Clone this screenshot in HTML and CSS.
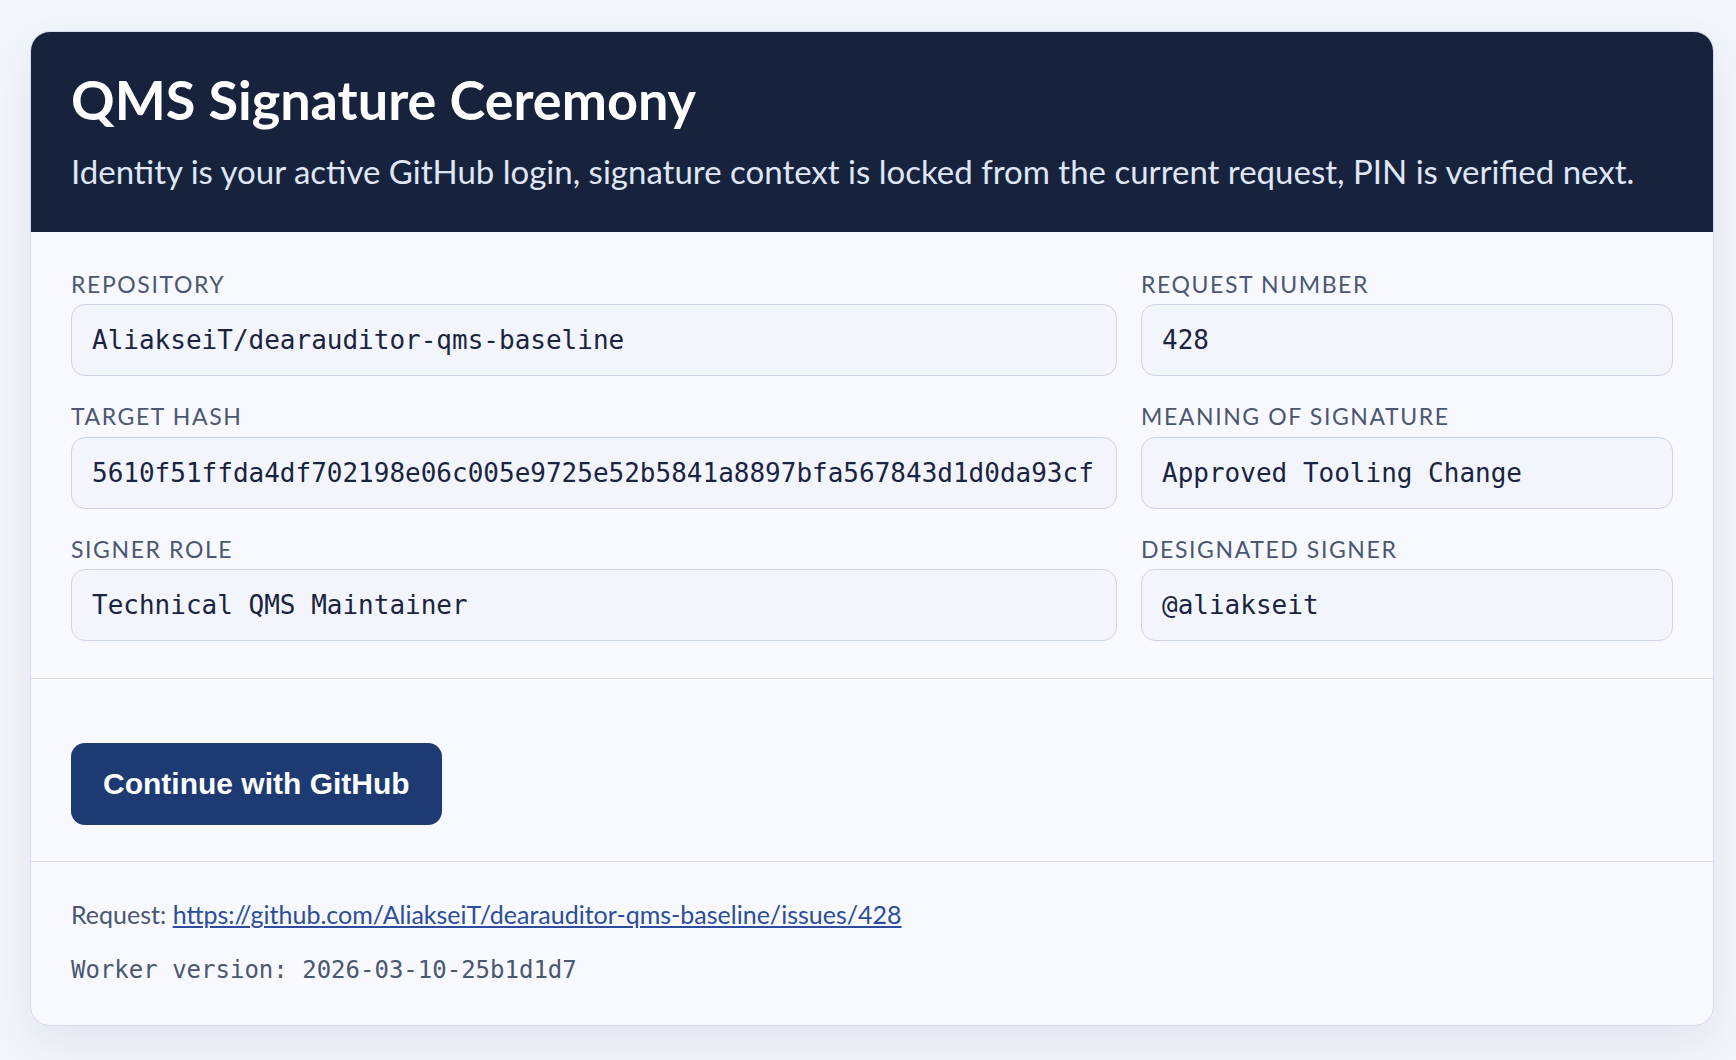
FILE: index.html
```html
<!DOCTYPE html>
<html lang="en">
<head>
    <meta charset="UTF-8">
    <meta name="viewport" content="width=device-width, initial-scale=1.0">
    <title>QMS Signature Ceremony</title>
    <link rel="stylesheet" href="styles.css">
</head>
<body>
    <main class="card">
        <header class="card-head">
            <h1>QMS Signature Ceremony</h1>
            <p>Identity is your active GitHub login, signature context is locked from the current request, PIN is verified next.</p>
        </header>

        <section class="fields">
            <div class="field">
                <label>Repository</label>
                <div class="value">AliakseiT/dearauditor-qms-baseline</div>
            </div>
            <div class="field">
                <label>Request number</label>
                <div class="value">428</div>
            </div>
            <div class="field">
                <label>Target hash</label>
                <div class="value">5610f51ffda4df702198e06c005e9725e52b5841a8897bfa567843d1d0da93cf</div>
            </div>
            <div class="field">
                <label>Meaning of signature</label>
                <div class="value">Approved Tooling Change</div>
            </div>
            <div class="field">
                <label>Signer role</label>
                <div class="value">Technical QMS Maintainer</div>
            </div>
            <div class="field">
                <label>Designated signer</label>
                <div class="value">@aliakseit</div>
            </div>
        </section>

        <section class="actions">
            <button type="button">Continue with GitHub</button>
        </section>

        <footer class="meta">
            <p>Request: <a href="#">https://github.com/AliakseiT/dearauditor-qms-baseline/issues/428</a></p>
            <p class="version">Worker version: 2026-03-10-25b1d1d7</p>
        </footer>
    </main>
</body>
</html>
```

FILE: styles.css
```css
body {
    margin: 0;
    padding: 31px 22px 34px 30px;
    font-family: Lato, "Noto Sans", sans-serif;
    background: #f2f5fb;
    color: #1a2440;
}
.card {
    background: #f7f9fe;
    border: 1px solid #d5dbea;
    border-radius: 20px;
    overflow: hidden;
    box-shadow: 0 18px 44px rgba(23, 34, 64, 0.07);
}
.card-head {
    background: #17223d;
    color: #fff;
    padding: 36px 40px 39px;
}
.card-head h1 {
    margin: 0;
    font-size: 54px;
    line-height: 1.2;
    font-weight: 700;
}
.card-head p {
    margin: 17px 0 0;
    font-size: 33px;
    line-height: 1.3;
    color: #dfe6f5;
}
.fields {
    display: grid;
    grid-template-columns: minmax(0, 1fr) 532px;
    column-gap: 24px;
    row-gap: 27px;
    padding: 39px 40px 37px;
    border-bottom: 1px solid #d6dcec;
}
.field label {
    display: block;
    font-size: 23px;
    line-height: 1.2;
    letter-spacing: 1.6px;
    text-transform: uppercase;
    color: #4b5672;
    margin-bottom: 6px;
}
.value {
    font-family: "DejaVu Sans Mono", monospace;
    font-size: 26px;
    line-height: 32px;
    padding: 19px 20px;
    background: #f2f5fc;
    border: 1px solid #ccd4e6;
    border-radius: 14px;
    white-space: nowrap;
    overflow: hidden;
}
.actions {
    padding: 64px 40px 36px;
    border-bottom: 1px solid #d6dcec;
}
button {
    font-family: "Liberation Sans", Arial, sans-serif;
    font-size: 30px;
    font-weight: 700;
    line-height: 36px;
    padding: 23px 32px;
    border: none;
    border-radius: 14px;
    background: #1e3a72;
    color: #fff;
    cursor: pointer;
}
.meta {
    padding: 35px 40px 37px;
    color: #4b5672;
}
.meta p {
    margin: 0;
    font-size: 25px;
    line-height: 1.4;
}
.meta a {
    color: #2c4c9c;
}
.meta .version {
    margin-top: 22px;
    font-family: "DejaVu Sans Mono", monospace;
    font-size: 24px;
}
```
